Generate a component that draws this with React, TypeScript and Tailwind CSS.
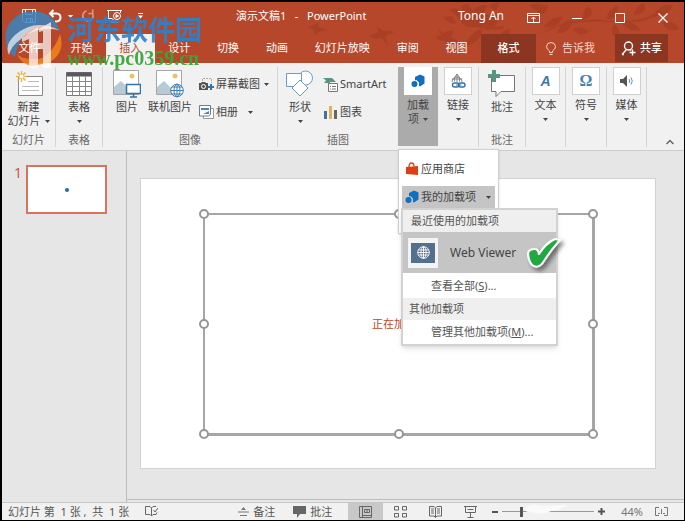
import type { ReactNode } from "react";

const Caret = ({ className = "" }: { className?: string }) => (
  <svg width="5" height="3" viewBox="0 0 5 3" fill="currentColor" className={`shrink-0 ${className}`}>
    <path d="M0 0h5L2.5 3z" />
  </svg>
);

function Branches() {
  return (
    <svg
      viewBox="0 0 400 61"
      preserveAspectRatio="xMaxYMin slice"
      className="absolute top-0 right-0 h-full w-[400px] pointer-events-none"
      fill="#9c3b22"
      opacity="0.5"
    >
      <path d="M23 25q8-2 12-5l-1 5q5 1 9 3l-8 2-4 4-1-6zM93 24l6 5q6-1 12 1l-9 4 2 10-7-8q-6 2-12-2l9-4zM153 27l6 4q5-3 11-2l-3 6q8 4 10 8l-9-1-3 8-4-11q-6 0-10-4l7-2z" />
      <path d="M165 8q7-4 12 1 0-8 7-7 4 3 4 7 6-7 15-6l-3 9q8 0 12 7-8 7-18 5-9 4-15-2-5-8-14-14zM192 22q14 4 28 2l-1 3q-14 2-29-3z" />
      <path d="M168 14l-8 1q3 7 13 7zM205 4q6-4 11-3l-5 8z" />
      <path d="M225 33q20 4 42-7 26-11 54-8 22 3 39-2l21-9 1 2q-18 12-42 12-32-3-60 1-26 13-55 13z" />
      <path d="M180 45q6-15 19-19-1 14-19 19zM201 28q3-14 12-17 4 11-8 17zM214 37q3-9 12-10 1 10-12 10zM245 3q10-4 17 2-9 8-17-2zM252 14q2-9 11-12 3 9-11 12zM260 25q8-12 19-10-5 12-19 10zM273 31q4-13 16-13-3 14-16 13zM289 27q9-4 16 3-10 6-16-3zM300 18q-3-9 5-14 8 9-5 14zM322 17q2-10 11-13 4 13-11 13zM337 19q10-3 20 9-15 3-20-9zM330 22q8 6 4 14-10-4-4-14zM350 13q2-10 10-12 5 10-10 12zM370 13q6-12 19-10-4 13-19 10zM378 21q12-4 17 6-11 5-17-6z" />
    </svg>
  );
}

function TitleBar() {
  return (
    <div className="relative flex h-8 items-center text-white">
      <div className="flex w-[234px] shrink-0 items-center pl-5 -mt-1">
        <button aria-label="保存" className="mr-3">
          <svg width="14" height="14" viewBox="0 0 14 14" fill="none" stroke="currentColor">
            <path d="M.5.5h13v13H2.5l-2-2zM3.5.5v5h7v-5M4.5 13.5v-4h6v4M8.5 10v3" />
          </svg>
        </button>
        <button aria-label="撤消" className="flex items-center gap-1.5">
          <svg width="14" height="14" viewBox="0 0 14 14" fill="none" stroke="currentColor" strokeWidth="2">
            <path d="M5.500 1L2 4.500 5.500 8M2 4.500h6.500q4 .5 4 4t-4 4H7" />
          </svg>
          <Caret />
        </button>
        <button aria-label="重复" className="ml-2 opacity-45">
          <svg width="14" height="14" viewBox="0 0 14 14" fill="none" stroke="currentColor" strokeWidth="1.600">
            <path d="M5.500 1.800a5.200 5.200 0 1 0 5.500 1.700M7.500 4.500h4.200V.5" />
          </svg>
        </button>
        <button aria-label="从头开始" className="ml-3">
          <svg width="15" height="14" viewBox="0 0 15 14" fill="none" stroke="currentColor">
            <path d="M0 1.500h15M1.500 2v7.500h4M13.500 2v2M6 10v3M3.500 13.500h8" />
            <circle cx="10" cy="7" r="3.500" />
            <path d="M9 5.500v3L11.500 7z" fill="currentColor" />
          </svg>
        </button>
        <button aria-label="自定义快速访问工具栏" className="ml-4">
          <svg width="5" height="6" viewBox="0 0 5 6" fill="currentColor">
            <path d="M0 0h5v1H0zM0 2.500h5L2.500 5.500z" />
          </svg>
        </button>
      </div>
      <h1 className="-mt-1 flex-1 truncate text-[11px]">演示文稿1&nbsp;&nbsp; -&nbsp;&nbsp; PowerPoint</h1>
      <span className="-mt-1 mr-2 text-xs">Tong An</span>
      <button aria-label="功能区显示选项" className="flex w-[43px] justify-center">
        <svg width="13" height="10" viewBox="0 0 13 10" fill="none" stroke="currentColor">
          <path d="M.5.5h12v9H.5zM.5 2.500h12M6.500 9V4.500M4.500 6l2-2 2 2" />
        </svg>
      </button>
      <button aria-label="最小化" className="flex w-[43px] justify-center">
        <svg width="10" height="10" viewBox="0 0 10 10" stroke="currentColor">
          <path d="M0 5.500h10" />
        </svg>
      </button>
      <button aria-label="最大化" className="flex w-[43px] justify-center">
        <svg width="10" height="10" viewBox="0 0 10 10" fill="none" stroke="currentColor">
          <path d="M.5.5h9v9h-9z" />
        </svg>
      </button>
      <button aria-label="关闭" className="flex w-[43px] justify-center">
        <svg width="10" height="10" viewBox="0 0 10 10" fill="none" stroke="currentColor" strokeWidth="1.200">
          <path d="M.5.5l9 9M9.500.5l-9 9" />
        </svg>
      </button>
    </div>
  );
}

const tabs = ["开始", "插入", "设计", "切换", "动画", "幻灯片放映", "审阅", "视图"];

function TabRow() {
  return (
    <nav className="relative flex h-[29px] items-stretch text-[11px] text-white">
      <button className="w-[55px]">文件</button>
      <div className="flex w-[424px]">
        {tabs.map((tab) => (
          <button
            key={tab}
            className={
              tab === "插入"
                ? "flex-auto bg-[#f1f1f1] px-3 text-[#b7472a]"
                : "flex-auto px-3"
            }
          >
            {tab}
          </button>
        ))}
      </div>
      <button className="w-[55px] bg-[#8c3520] font-medium">格式</button>
      <button className="ml-2.5 flex items-center gap-1.5 text-[#f6d5cb]">
        <svg width="10" height="14" viewBox="0 0 10 14" fill="none" stroke="currentColor">
          <path d="M3.500 10.500V9Q.5 7 .5 4.500q.5-4 4.500-4t4.500 4Q9.500 7 6.500 9v1.500zM3.500 12.500h3" />
        </svg>
        告诉我
      </button>
      <button className="mr-4 mb-px ml-auto flex w-[53px] items-center justify-center gap-1 bg-[#8c3520] font-medium">
        <svg width="15" height="15" viewBox="0 0 15 15" fill="none" stroke="currentColor" strokeWidth="1.400">
          <circle cx="7.500" cy="5" r="4" />
          <path d="M5.500 8.500L1 13.500M1 13.500h2M9 8.500l1 1M8.500 11.500h6M11.500 8.500v6" />
        </svg>
        共享
      </button>
    </nav>
  );
}

function Group({ label, className, children }: { label?: string; className: string; children: ReactNode }) {
  return (
    <section className={`flex shrink-0 flex-col border-r border-[#d5d5d5] ${className}`}>
      <div className="flex flex-1 justify-center">{children}</div>
      {label && <div className="text-center text-[#666]">{label}</div>}
    </section>
  );
}

function BigButton({ icon, className = "", children }: { icon: ReactNode; className?: string; children: ReactNode }) {
  return (
    <button className={`flex flex-col items-center whitespace-nowrap ${className}`}>
      <span className="flex h-[33px] items-center">{icon}</span>
      {children}
    </button>
  );
}

function SmallButton({ icon, children }: { icon: ReactNode; children: ReactNode }) {
  return (
    <button className="flex h-7 items-center gap-0.5 whitespace-nowrap">
      {icon}
      {children}
    </button>
  );
}

function TileButton({ icon, label }: { icon: ReactNode; label: string }) {
  return (
    <button className="flex flex-col items-center">
      <span className="mb-[3px] flex size-7 items-center justify-center border border-[#d0d0d0] bg-white">{icon}</span>
      {label}
      <span className="flex h-3.5 items-center">
        <Caret />
      </span>
    </button>
  );
}

const AddinIcon = () => (
  <svg width="14" height="14" viewBox="0 0 14 14" fill="#0f6fc0">
    <path d="M4 3l5-2.500 4.500 2v7L9 12.500 8 12V8.500L5.500 6 4 6.500z" />
    <circle cx="3.500" cy="10" r="3" />
  </svg>
);

const PictureBase = () => (
  <>
    <path d="M.5.5h25v24H.5z" fill="#fff" stroke="#a5a5a5" />
    <circle cx="19" cy="6" r="2.500" fill="#e8c46a" />
    <path d="M1 24v-7l7-6 8 8v5z" fill="#b7cad6" />
  </>
);

function AddinMenu() {
  return (
    <div className="absolute top-[82px] left-0 z-10 h-[85px] w-[101px] border border-[#cfcfcf] bg-white pt-[7px] text-left shadow-sm">
      <button className="flex h-6 w-full items-center gap-0.5 pl-1.5">
        <svg width="14" height="14" viewBox="0 0 14 14">
          <path d="M1 5l12-1v9L1 12z" fill="#dc3e15" />
          <path d="M4 5Q4 1 6.500 1T9 4.500" fill="none" stroke="#dc3e15" strokeWidth="1.300" />
        </svg>
        应用商店
      </button>
      <div className="relative mx-[3px] mt-[5px]">
        <button className="flex h-[22px] w-full items-center gap-0.5 bg-[#c5c5c5] pl-[3px]">
          <AddinIcon />
          我的加载项
          <Caret className="mr-1 ml-auto" />
        </button>
        <div className="absolute top-[22px] -left-px w-[157px] border-2 border-[#d2d2d2] bg-white text-[#555] shadow-md">
          <h2 className="bg-[#efefef] pl-2 leading-[22px]">最近使用的加载项</h2>
          <button className="relative flex h-[41px] w-full items-center bg-[#c5c5c5] text-xs text-[#444]">
            <span className="ml-[5px] flex size-[30px] items-center justify-center bg-[#f4f4f4]">
              <span className="flex h-5 w-6 items-center justify-center bg-[#54708f]">
                <svg width="13" height="13" viewBox="0 0 13 13" fill="none" stroke="#fff" strokeWidth="0.900">
                  <circle cx="6.500" cy="6.500" r="5.800" />
                  <ellipse cx="6.500" cy="6.500" rx="2.600" ry="5.800" />
                  <path d="M1.500 4h10M1.500 9h10M.7 6.500h11.600M6.500.7v11.600" />
                </svg>
              </span>
            </span>
            <span className="ml-3">Web Viewer</span>
            <svg
              width="42"
              height="38"
              viewBox="0 0 42 38"
              className="absolute top-0.5 left-[121px] drop-shadow-[3px_3px_2px_rgba(0,0,0,0.45)]"
            >
              <path
                d="M4 19q1-4 7-4 3 0 4 5Q22 9 31 5l5 1Q27 16 18 30q-5 5-10 1Q4 26 4 19z"
                fill="#1fa940"
                stroke="#fff"
                strokeWidth="2.200"
                strokeLinejoin="round"
              />
            </svg>
          </button>
          <button className="block h-[25px] w-full pl-7 text-left">
            查看全部(<u>S</u>)...
          </button>
          <h2 className="bg-[#efefef] pl-1.5 leading-[22px]">其他加载项</h2>
          <button className="block h-6 w-full pl-7 text-left">
            管理其他加载项(<u>M</u>)...
          </button>
        </div>
      </div>
    </div>
  );
}

function Ribbon() {
  return (
    <div className="relative flex h-[88px] border-b border-[#cdcdcd] bg-[#f1f1f1] pt-1 pb-[3px] text-[11px] leading-[14px] text-[#444]">
      <Group label="幻灯片" className="w-[54px]">
        <BigButton
          icon={
            <svg width="28" height="28" viewBox="0 0 28 28" fill="none">
              <path d="M3.500 6.500h24v19h-24z" fill="#fff" stroke="#8a8a8a" />
              <path d="M13 11.500h11M7 16.500h17M7 20.500h17" stroke="#bbb" />
              <path d="M6.500 1v11M1 6.500h11M2.500 2.500l8 8M10.500 2.500l-8 8" stroke="#e9b44c" strokeWidth="1.500" />
              <circle cx="6.500" cy="6.500" r="2" fill="#fff" />
            </svg>
          }
        >
          <span>新建</span>
          <span className="flex items-center gap-1">
            幻灯片 <Caret />
          </span>
        </BigButton>
      </Group>
      <Group label="表格" className="w-[47px]">
        <BigButton
          icon={
            <svg width="26" height="24" viewBox="0 0 26 24" fill="none">
              <path d="M.5.5h25v23H.5z" fill="#fff" stroke="#777" />
              <path d="M.5.5h25v4H.5z" fill="#595959" />
              <path d="M0 9.500h26M0 14.500h26M0 19.500h26M6.500 4v20M13.500 4v20M19.500 4v20" stroke="#888" />
            </svg>
          }
        >
          <span>表格</span>
          <span className="flex h-3.5 items-center">
            <Caret />
          </span>
        </BigButton>
      </Group>
      <Group label="图像" className="w-[175px]">
        <BigButton
          className="w-8"
          icon={
            <svg width="28" height="28" viewBox="0 0 28 28">
              <PictureBase />
              <path d="M13.500 14.500h14v9h-14z" fill="#fff" stroke="#3273a8" strokeWidth="1.500" />
              <path d="M20.500 24v3M17 27h7" stroke="#3273a8" strokeWidth="1.500" />
            </svg>
          }
        >
          图片
        </BigButton>
        <BigButton
          className="w-[54px]"
          icon={
            <svg width="28" height="28" viewBox="0 0 28 28">
              <PictureBase />
              <g fill="#fff" stroke="#3f7cae">
                <circle cx="21" cy="20.500" r="6.300" />
                <ellipse cx="21" cy="20.500" rx="3" ry="6.300" />
                <path d="M14.700 20.500h12.600M16 17h10M16 24h10M21 14v13" />
              </g>
            </svg>
          }
        >
          联机图片
        </BigButton>
        <div className="ml-0.5 pt-[3px]">
          <SmallButton
            icon={
              <svg width="15" height="14" viewBox="0 0 15 14" fill="none">
                <path d="M3.500 4V1.500h9V6" stroke="#aaa" strokeDasharray="2 1" />
                <path d="M0 6h2l1-1h3l1 1h2v7H0z" fill="#555" />
                <circle cx="4.500" cy="9.500" r="2" stroke="#fff" />
                <path d="M12 7v6M9 10h6" stroke="#3273a8" strokeWidth="2" />
              </svg>
            }
          >
            屏幕截图 <Caret className="ml-0.5" />
          </SmallButton>
          <SmallButton
            icon={
              <svg width="15" height="14" viewBox="0 0 15 14" fill="#fff">
                <path d="M4.500 3.500h10v10h-10z" stroke="#999" />
                <path d="M.5.5h11v9l-2 1.500h-9z" stroke="#667f92" />
                <path d="M2 3h8v2H2zM4 9l6-3v3z" fill="#4c86b4" />
              </svg>
            }
          >
            相册 <Caret className="ml-2" />
          </SmallButton>
        </div>
      </Group>
      <section className="flex w-[120px] shrink-0 flex-col">
        <div className="flex flex-1 pl-1">
          <BigButton
            className="w-9"
            icon={
              <svg width="28" height="27" viewBox="0 0 28 27" fill="#fff" stroke="#6f9cc4">
                <circle cx="19.500" cy="8" r="7" />
                <path d="M.5 3.500h15v13H.5z" />
                <path d="M14 10l8 8-8 8-8-8z" />
              </svg>
            }
          >
            <span>形状</span>
            <span className="flex h-3.5 items-center">
              <Caret />
            </span>
          </BigButton>
          <div className="ml-[5px] pt-[3px]">
            <SmallButton
              icon={
                <svg width="15" height="15" viewBox="0 0 15 15">
                  <path d="M0 1h9l4 4H7v4H5V6H1l2-2.500z" fill="#5b947d" />
                  <path d="M5.500 6.500h9v8h-9z" fill="#fff" stroke="#777" />
                  <path d="M7 9.500h1M9 9.500h4M7 12h1M9 12h4" stroke="#777" />
                </svg>
              }
            >
              SmartArt
            </SmallButton>
            <SmallButton
              icon={
                <svg width="15" height="13" viewBox="0 0 15 13">
                  <path d="M1 5h3v8H1z" fill="#4472a0" />
                  <path d="M6 0h3v13H6z" fill="#e0b05c" />
                  <path d="M11 4h3v9h-3z" fill="#666" />
                </svg>
              }
            >
              图表
            </SmallButton>
          </div>
        </div>
        <div className="text-center text-[#666]">插图</div>
      </section>
      <div className="relative w-10 shrink-0">
        <button className="flex h-[79px] w-10 flex-col items-center bg-[#ababab]">
          <span className="mb-[3px] flex size-7 items-center justify-center bg-white">
            <AddinIcon />
          </span>
          <span>加载</span>
          <span className="flex items-center gap-1">
            项 <Caret />
          </span>
        </button>
        <AddinMenu />
      </div>
      <Group className="w-[41px]">
        <TileButton
          label="链接"
          icon={
            <svg width="16" height="16" viewBox="0 0 16 16" fill="none" stroke="#777">
              <path d="M2 9a5 5 0 1 1 10 0M1.800 6h10.400M7 1v8M4.500 8.500Q3.500 4 7 1q3.500 3 2.500 7.500" strokeWidth="0.900" />
              <rect x="2.500" y="10" width="6.500" height="4" rx="2" stroke="#3273a8" strokeWidth="1.400" />
              <rect x="8.500" y="10" width="6.500" height="4" rx="2" stroke="#3273a8" strokeWidth="1.400" />
              <path d="M6 12h5.500" stroke="#3273a8" />
            </svg>
          }
        />
      </Group>
      <Group label="批注" className="w-[47px]">
        <BigButton
          icon={
            <svg width="28" height="28" viewBox="0 0 28 28" fill="none">
              <path d="M3.500 5.500h23v16H13l-5 5v-5H3.500z" fill="#fff" stroke="#777" />
              <path d="M6 0v12M0 6h12" stroke="#5b947d" strokeWidth="4" />
            </svg>
          }
        >
          批注
        </BigButton>
      </Group>
      <Group className="w-10">
        <TileButton
          label="文本"
          icon={<span className="font-[Liberation_Sans] text-sm font-bold text-[#3d79ab] italic">A</span>}
        />
      </Group>
      <Group className="w-[41px]">
        <TileButton
          label="符号"
          icon={<span className="font-[Liberation_Serif] text-base font-bold text-[#4a80ad]">Ω</span>}
        />
      </Group>
      <Group className="w-10">
        <TileButton
          label="媒体"
          icon={
            <svg width="14" height="12" viewBox="0 0 14 12" fill="none">
              <path d="M0 4h3l4-4v12L3 8H0z" fill="#555" />
              <path d="M9 4q1.500 2 0 4M11 2.500q2.500 3.500 0 7" stroke="#5a93c0" />
            </svg>
          }
        />
      </Group>
      <button aria-label="折叠功能区" className="mt-auto mr-2.5 mb-0.5 ml-auto">
        <svg width="8" height="6" viewBox="0 0 8 6" fill="none" stroke="#666" strokeWidth="1.500">
          <path d="M.5 5L4 1.500 7.500 5" />
        </svg>
      </button>
    </div>
  );
}

// resize handles, placed on the edges of the content frame
const handles = [
  "-top-[6px] -left-[6px]",
  "-top-[6px] left-1/2 -ml-[5px]",
  "-top-[6px] -right-[6px]",
  "top-1/2 -mt-[5px] -left-[6px]",
  "top-1/2 -mt-[5px] -right-[6px]",
  "-bottom-[6px] -left-[6px]",
  "-bottom-[6px] left-1/2 -ml-[5px]",
  "-bottom-[6px] -right-[6px]",
];

function Workspace() {
  return (
    <main className="flex flex-1 bg-[#e6e6e6]">
      <aside className="flex w-[125px] shrink-0 items-start gap-1 border-r border-[#bdbdbd] pt-3.5 pl-3">
        <span className="w-2 text-sm leading-4 text-[#c8553f]">1</span>
        <button
          aria-label="幻灯片 1"
          className="flex h-[49px] w-[81px] items-center justify-center border-2 border-[#d9735c] bg-white"
        >
          <span className="size-1 rounded-sm bg-[#1d6f9f]" />
        </button>
      </aside>
      <div className="mb-0.5 flex-1 border-b border-[#bdbdbd] pt-[27px] pr-7 pl-[13px]">
        <div className="aspect-[516/291] w-full border border-[#d2d2d2] bg-white pt-[34px] pr-[60px] pb-8 pl-[62px]">
          <div className="relative flex h-full items-center justify-center border-2 border-r-[3px] border-b-[3px] border-[#a6a6a6] text-[11px] text-[#c0452b]">
            正在加载...
            {handles.map((place) => (
              <span
                key={place}
                className={`absolute size-2.5 rounded-full border-2 border-[#969696] bg-white ${place}`}
              />
            ))}
          </div>
        </div>
      </div>
    </main>
  );
}

function StatusBar() {
  return (
    <footer className="flex h-[18px] shrink-0 items-center border-t border-[#c6c6c6] bg-[#f1f1f1] pl-1.5 text-[11px] leading-4 text-[#555]">
      <span className="whitespace-pre">幻灯片 第  1 张 ,  共  1 张</span>
      <button aria-label="拼写检查" className="ml-4">
        <svg width="13" height="11" viewBox="0 0 13 11" fill="none" stroke="#666">
          <path d="M6.500 10L5 8.500H.5v-8H5L6.500 2 8 .5h3M6.500 2v8l1.500-1.500h3l1-2M8.500 4l1.500 2 3-4" />
        </svg>
      </button>
      <div className="mr-4 ml-auto flex items-center">
        <button className="flex items-center gap-1">
          <svg width="11" height="10" viewBox="0 0 11 10" fill="#777">
            <path d="M5.500 0L8 3H3zM0 4.500h11v1H0zM2 8h7v1H2z" />
          </svg>
          备注
        </button>
        <button className="ml-4.5 flex items-center gap-1">
          <svg width="13" height="12" viewBox="0 0 13 12" fill="#666">
            <path d="M0 0h13v8H7l-3 4V8H0z" />
          </svg>
          批注
        </button>
        <button aria-label="普通视图" className="ml-4 flex h-[17px] w-[35px] items-center justify-center bg-[#c8c8c8]">
          <svg width="13" height="12" viewBox="0 0 13 12" fill="none" stroke="#666">
            <path d="M.5.5h12v11H.5zM3.500.5v11M5.500 3.500h5v3h-5zM3.500 9.500h9M7 5h2" />
          </svg>
        </button>
        <button aria-label="幻灯片浏览" className="flex w-[35px] justify-center">
          <svg width="13" height="12" viewBox="0 0 13 12" fill="none" stroke="#666">
            <path d="M.5.5h4v3.500h-4zM8.500.5h4v3.500h-4zM.5 7.500h4V11h-4zM8.500 7.500h4V11h-4z" />
          </svg>
        </button>
        <button aria-label="阅读视图" className="flex w-[35px] justify-center">
          <svg width="13" height="12" viewBox="0 0 13 12" fill="none" stroke="#666">
            <path d="M6.500 11.500V2L5 .5H.5v9.500H5zM6.500 2L8 .5h4.500v9.500H8l-1.500 1.500M2 3h3M2 5h3M2 7h3M8 3h3M8 5h3M8 7h3" />
          </svg>
        </button>
        <button aria-label="幻灯片放映" className="flex w-[35px] justify-center">
          <svg width="13" height="12" viewBox="0 0 13 12" fill="none" stroke="#666">
            <path d="M0 .5h13M1.500 1v5.500h10V1M3.500 3.500h6M6.500 7v4M3.500 11.500h6" />
          </svg>
        </button>
        <button aria-label="缩小" className="ml-1">
          <svg width="6" height="6" viewBox="0 0 6 6" fill="#555">
            <path d="M0 2h6v2H0z" />
          </svg>
        </button>
        <div className="relative mx-1 flex">
          <input
            type="range"
            aria-label="显示比例"
            defaultValue={20}
            className="h-2.5 w-[92px] appearance-none bg-[linear-gradient(#999,#999)] bg-[length:100%_1px] bg-center bg-no-repeat [&::-webkit-slider-thumb]:h-2.5 [&::-webkit-slider-thumb]:w-[3px] [&::-webkit-slider-thumb]:appearance-none [&::-webkit-slider-thumb]:bg-[#555]"
          />
          <svg
            width="44"
            height="12"
            viewBox="0 0 44 12"
            fill="#fafafa"
            className="pointer-events-none absolute -top-1 left-[23px]"
          >
            <path d="M2 3q8-3 14 0l26-1q-6 5-16 6l-5 2q-8 2-14-1-5 1-7-2z" />
          </svg>
        </div>
        <button aria-label="放大">
          <svg width="7" height="7" viewBox="0 0 7 7" fill="#555">
            <path d="M0 2.500h7v2H0zM2.500 0h2v7h-2z" />
          </svg>
        </button>
        <span className="ml-4 text-[#777]">44%</span>
        <button aria-label="适应窗口" className="ml-3">
          <svg width="13" height="9" viewBox="0 0 13 9" fill="none" stroke="#777">
            <path d="M4 .5H.5v8H4M9 .5h3.500v8H9M6.500 2v5M3 6.500h2M8 6.500h2" />
          </svg>
        </button>
      </div>
    </footer>
  );
}

function Watermark() {
  return (
    <div className="pointer-events-none absolute top-2.5 left-[3px] flex items-start">
      <svg width="60" height="58" viewBox="0 0 60 58">
        <path d="M1 29A27 25 0 0 1 55 20Q42 8 28 16 14 22 10 45 1 39 1 29z" fill="#3a84c0" opacity="0.85" />
        <path d="M55 22q6 20-12 29H23q24-4 32-29z" fill="#ef7d1c" opacity="0.9" />
        <path d="M12 42q3 9 14 12 22-2 29-16-14 10-27 9-12 0-16-5z" fill="#ef7d1c" opacity="0.85" />
        <path
          d="M24 56V27l-7 3v-4l16-11v16h5V19l-4 1v-3l12-7v46h-8V37h-5v19z"
          fill="#fff"
          opacity="0.7"
        />
        <path d="M4 43q-5-10 6-20 20-17 44-5-23-4-38 9-10 7-12 16z" fill="#fff" opacity="0.65" />
      </svg>
      <div className="flex flex-col pl-0.5">
        <span className="text-[27px] leading-[36px] font-bold whitespace-nowrap text-[#2f80c8] opacity-90">
          河东软件园
        </span>
        <span className="font-[Liberation_Serif] text-xl leading-5 font-bold text-[#3da53a] opacity-95">
          www.pc0359.cn
        </span>
      </div>
    </div>
  );
}

export default function App() {
  return (
    <div className="flex min-h-screen flex-col overflow-hidden border border-t-2 border-l-2 border-black bg-[#e6e6e6] font-['Noto_Sans','Noto_Sans_CJK_SC',sans-serif]">
      <header className="relative z-10">
        <div className="relative bg-[#b7472a]">
          <Branches />
          <TitleBar />
          <TabRow />
        </div>
        <Ribbon />
        <Watermark />
      </header>
      <Workspace />
      <StatusBar />
    </div>
  );
}
